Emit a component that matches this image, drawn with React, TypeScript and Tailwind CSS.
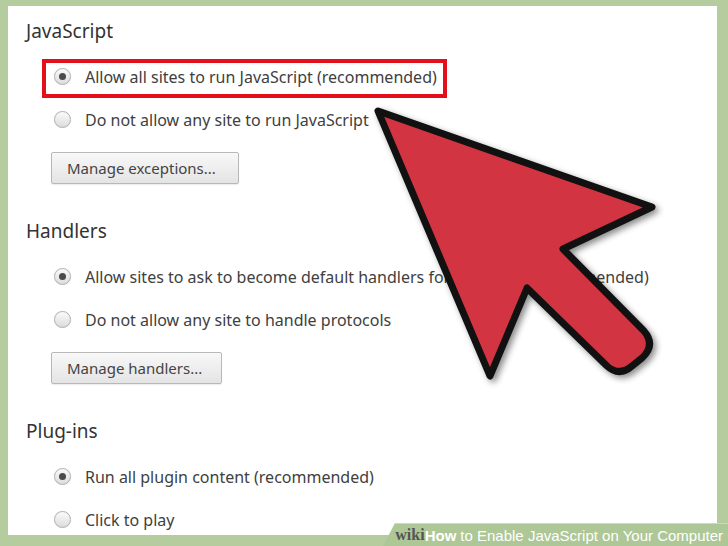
import React from "react";

type Option = { label: string; checked?: boolean; highlight?: boolean };

type Section = { title: string; options: Option[]; button?: { label: string; width: string } };

const sections: Section[] = [
  {
    title: "JavaScript",
    options: [
      { label: "Allow all sites to run JavaScript (recommended)", checked: true, highlight: true },
      { label: "Do not allow any site to run JavaScript" },
    ],
    button: { label: "Manage exceptions...", width: "w-[188px]" },
  },
  {
    title: "Handlers",
    options: [
      { label: "Allow sites to ask to become default handlers for protocols (recommended)", checked: true },
      { label: "Do not allow any site to handle protocols" },
    ],
    button: { label: "Manage handlers...", width: "w-[171px]" },
  },
  {
    title: "Plug-ins",
    options: [
      { label: "Run all plugin content (recommended)", checked: true },
      { label: "Click to play" },
    ],
  },
];

function Radio({ checked }: { checked?: boolean }) {
  return (
    <span className="flex items-center justify-center w-[17px] h-[17px] rounded-full border border-[#b0b0b0] bg-gradient-to-b from-[#fbfbfb] to-[#dcdcdc] shadow-[0_0_1px_rgba(0,0,0,0.15)] shrink-0">
      {checked && <span className="w-[7px] h-[7px] rounded-full bg-[#4b4b4b]" />}
    </span>
  );
}

function Arrow() {
  return (
    <svg
      className="absolute left-0 top-0 pointer-events-none drop-shadow-[3px_3px_3px_rgba(0,0,0,0.45)]"
      width="728"
      height="546"
      viewBox="0 0 728 546"
    >
      <path
        d="M378 111 L652 207 L563 249 L644 331 Q656 345 642 358 L632 366 Q619 377 607 366 L527 288 L490 376 Z"
        fill="#d23441"
        stroke="#111"
        strokeWidth="7"
        strokeLinejoin="round"
      />
    </svg>
  );
}

export default function App() {
  return (
    <div className="relative w-[728px] h-[546px] overflow-hidden bg-[#b4cc9e] pt-[6px] pl-[8px] pr-[11px] pb-[11px] font-['Noto_Sans','Open_Sans',sans-serif]">
      <main className="flex flex-col h-full bg-white overflow-hidden pt-[13px] pl-[18px]">
        {sections.map((s) => (
          <section key={s.title} className="flex flex-col h-[200px] shrink-0">
            <h2 className="h-6 leading-6 text-[19px] text-[#333]">{s.title}</h2>
            <div className="flex flex-col mt-[12px] pl-[28px]">
              {s.options.map((o) => (
                <div key={o.label} className="relative flex items-center gap-[14px] h-[43px]">
                  {o.highlight && (
                    <span className="absolute -left-[12px] top-[4px] bottom-0 w-[405px] border-[4px] border-[#e3101b]" />
                  )}
                  <Radio checked={o.checked} />
                  <span className="text-[16px] text-[#404040] whitespace-nowrap">{o.label}</span>
                </div>
              ))}
              {s.button && (
                <button
                  className={`mt-[11px] -ml-[3px] h-[32px] ${s.button.width} text-left px-[15px] whitespace-nowrap rounded-[2px] border border-[#b8b8b8] bg-gradient-to-b from-[#f8f8f8] to-[#e4e4e4] text-[15px] text-[#444] shadow-[0_1px_1px_rgba(0,0,0,0.08)]`}
                >
                  {s.button.label}
                </button>
              )}
            </div>
          </section>
        ))}
      </main>

      <Arrow />

      <div className="absolute right-0 bottom-0 h-[23px] w-[345px] bg-[#aec796] border-t border-[#c9dbb8] [clip-path:polygon(12px_0,100%_0,100%_100%,0_100%)] flex items-center justify-end pr-[5px] font-['Liberation_Sans',Arial,sans-serif] text-[15px] leading-none">
        <span className="font-bold text-[#555] font-['Liberation_Serif',serif] text-[16px]">wiki</span>
        <span className="font-bold text-white">How</span>
        <span className="text-white ml-[4px]">to Enable JavaScript on Your Computer</span>
      </div>
    </div>
  );
}
